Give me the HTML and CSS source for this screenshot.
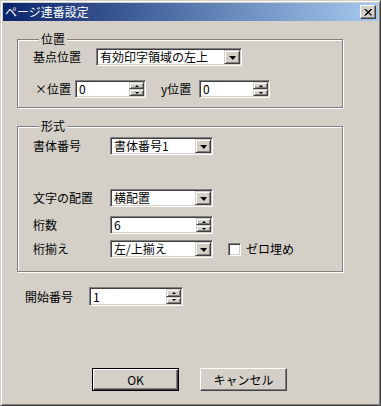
FILE: index.html
```html
<!DOCTYPE html>
<html lang="ja">
<head>
    <meta charset="UTF-8">
    <title>ページ連番設定</title>
    <link rel="stylesheet" href="styles.css">
</head>
<body>
    <div class="window">
        <div class="titlebar">
            <span class="title">ページ連番設定</span>
            <span class="close">
                <svg width="8" height="7" viewBox="0 0 8 7"><path d="M0.5 0 L7 6.5 M1.5 0 L8 6.5 M7 0 L0.5 6.5 M8 0 L1.5 6.5" stroke="#000" stroke-width="1"/></svg>
            </span>
        </div>

        <div class="content">
            <fieldset class="group group-pos">
                <legend>位置</legend>
                <div class="row">
                    <span class="lbl lbl-base">基点位置</span>
                    <div class="combo combo-base">
                        <span class="val">有効印字領域の左上</span>
                        <span class="drop"><i class="arrow"></i></span>
                    </div>
                </div>
                <div class="row row-xy">
                    <span class="lbl lbl-x">×位置</span>
                    <div class="spin spin-xy">
                        <span class="val">0</span>
                        <span class="spin-btns"><span class="sbtn"><i class="up"></i></span><span class="sbtn"><i class="down"></i></span></span>
                    </div>
                    <span class="lbl lbl-y">y位置</span>
                    <div class="spin spin-xy">
                        <span class="val">0</span>
                        <span class="spin-btns"><span class="sbtn"><i class="up"></i></span><span class="sbtn"><i class="down"></i></span></span>
                    </div>
                </div>
            </fieldset>

            <fieldset class="group group-fmt">
                <legend>形式</legend>
                <div class="row row-font">
                    <span class="lbl lbl-wide">書体番号</span>
                    <div class="combo combo-mid">
                        <span class="val">書体番号1</span>
                        <span class="drop"><i class="arrow"></i></span>
                    </div>
                </div>
                <div class="row row-layout">
                    <span class="lbl lbl-wide">文字の配置</span>
                    <div class="combo combo-mid">
                        <span class="val">横配置</span>
                        <span class="drop"><i class="arrow"></i></span>
                    </div>
                </div>
                <div class="row row-digits">
                    <span class="lbl lbl-wide">桁数</span>
                    <div class="spin combo-mid">
                        <span class="val">6</span>
                        <span class="spin-btns"><span class="sbtn"><i class="up"></i></span><span class="sbtn"><i class="down"></i></span></span>
                    </div>
                </div>
                <div class="row row-align">
                    <span class="lbl lbl-wide">桁揃え</span>
                    <div class="combo combo-mid">
                        <span class="val">左/上揃え</span>
                        <span class="drop"><i class="arrow"></i></span>
                    </div>
                    <span class="check"></span>
                    <span class="check-text">ゼロ埋め</span>
                </div>
            </fieldset>

            <div class="row row-start">
                <span class="lbl lbl-start">開始番号</span>
                <div class="spin spin-start">
                    <span class="val">1</span>
                    <span class="spin-btns"><span class="sbtn"><i class="up"></i></span><span class="sbtn"><i class="down"></i></span></span>
                </div>
            </div>

            <div class="buttons">
                <span class="btn btn-default">OK</span>
                <span class="btn">キャンセル</span>
            </div>
        </div>
    </div>
</body>
</html>
```

FILE: styles.css
```css
* {
    margin: 0;
    padding: 0;
    box-sizing: border-box;
}

body {
    font-family: "Noto Sans CJK JP", "Liberation Sans", sans-serif;
    font-size: 12px;
    line-height: 14px;
    color: #000;
    background-color: #d4d0c8;
}

.window {
    width: 381px;
    height: 406px;
    background-color: #d4d0c8;
    border: 1px solid;
    border-color: #d4d0c8 #404040 #404040 #d4d0c8;
    box-shadow: inset 1px 1px 0 #fff, inset -1px -1px 0 #808080;
    padding: 2px;
}

/* title bar */
.titlebar {
    height: 18px;
    display: flex;
    align-items: center;
    justify-content: space-between;
    background: linear-gradient(to right, #0a246a, #a6caf0);
    padding: 0 2px 0 2px;
}

.title {
    color: #fff;
    font-size: 12px;
}

.close {
    width: 16px;
    height: 14px;
    display: flex;
    align-items: center;
    justify-content: center;
    background-color: #d4d0c8;
    border: 1px solid;
    border-color: #fff #404040 #404040 #fff;
    box-shadow: inset -1px -1px 0 #808080;
}

.content {
    padding-left: 14px;
}

/* group boxes */
.group {
    width: 326px;
    border: 1px solid #808080;
    box-shadow: inset 1px 1px 0 #fff, 1px 1px 0 #fff;
    padding: 0 0 0 15px;
}

.group legend {
    margin-left: 6px;
    padding: 0 2px;
    background-color: #d4d0c8;
}

.group-pos {
    margin-top: 11px;
    padding-top: 2px;
    padding-bottom: 9px;
}

.group-fmt {
    margin-top: 11px;
    padding-top: 4px;
    padding-bottom: 13px;
}

.row {
    display: flex;
    align-items: center;
}

.row-xy {
    margin-top: 14px;
}

.row-layout {
    margin-top: 34px;
}

.row-digits {
    margin-top: 9px;
}

.row-align {
    margin-top: 6px;
}

.lbl-base {
    width: 63px;
}

.lbl-x {
    width: 42px;
    padding-left: 2px;
}

.lbl-y {
    width: 38px;
    margin-left: 15px;
}

.lbl-wide {
    width: 77px;
}

/* sunken fields */
.combo,
.spin {
    height: 18px;
    display: flex;
    align-items: center;
    background-color: #fff;
    border: 1px solid;
    border-color: #808080 #fff #fff #808080;
    box-shadow: inset 1px 1px 0 #404040, inset -1px -1px 0 #d4d0c8;
    padding: 1px;
}

.val {
    flex: 1;
    padding-left: 2px;
    white-space: nowrap;
}

.combo-base {
    width: 146px;
}

.combo-mid {
    width: 103px;
}

.spin-xy {
    width: 71px;
}

.spin-start {
    width: 94px;
}

.drop {
    width: 16px;
    height: 14px;
    display: flex;
    align-items: center;
    justify-content: center;
    background-color: #d4d0c8;
    border: 1px solid;
    border-color: #d4d0c8 #404040 #404040 #d4d0c8;
    box-shadow: inset 1px 1px 0 #fff, inset -1px -1px 0 #808080;
}

.arrow {
    width: 0;
    height: 0;
    border-left: 4px solid transparent;
    border-right: 3px solid transparent;
    border-top: 4px solid #000;
    margin-top: 1px;
}

.spin-btns {
    width: 15px;
    height: 14px;
    display: flex;
    flex-direction: column;
}

.sbtn {
    flex: 1;
    display: flex;
    align-items: center;
    justify-content: center;
    background-color: #d4d0c8;
    border: 1px solid;
    border-color: #d4d0c8 #404040 #404040 #d4d0c8;
    box-shadow: inset 1px 1px 0 #fff, inset -1px -1px 0 #808080;
}

.sbtn .up,
.sbtn .down {
    width: 0;
    height: 0;
    border-left: 2px solid transparent;
    border-right: 2px solid transparent;
}

.sbtn .up {
    border-bottom: 2px solid #000;
}

.sbtn .down {
    border-top: 2px solid #000;
}

/* check box */
.check {
    width: 13px;
    height: 13px;
    margin-left: 15px;
    background-color: #fff;
    border: 1px solid;
    border-color: #808080 #fff #fff #808080;
    box-shadow: inset 1px 1px 0 #404040, inset -1px -1px 0 #d4d0c8;
}

.check-text {
    margin-left: 5px;
}

.row-start {
    margin-top: 15px;
    padding-left: 8px;
}

.row-start .spin {
    height: 19px;
}

.row-start .spin-btns {
    height: 15px;
}

.lbl-start {
    width: 64px;
}

/* bottom buttons */
.buttons {
    display: flex;
    gap: 21px;
    margin-top: 62px;
    padding-left: 75px;
}

.btn {
    width: 87px;
    height: 23px;
    display: flex;
    align-items: center;
    justify-content: center;
    background-color: #d4d0c8;
    border: 1px solid;
    border-color: #fff #404040 #404040 #fff;
    box-shadow: inset -1px -1px 0 #808080;
}

.btn-default {
    border: 1px solid #000;
    box-shadow: inset 1px 1px 0 #fff, inset -1px -1px 0 #404040, inset -2px -2px 0 #808080;
}
```
